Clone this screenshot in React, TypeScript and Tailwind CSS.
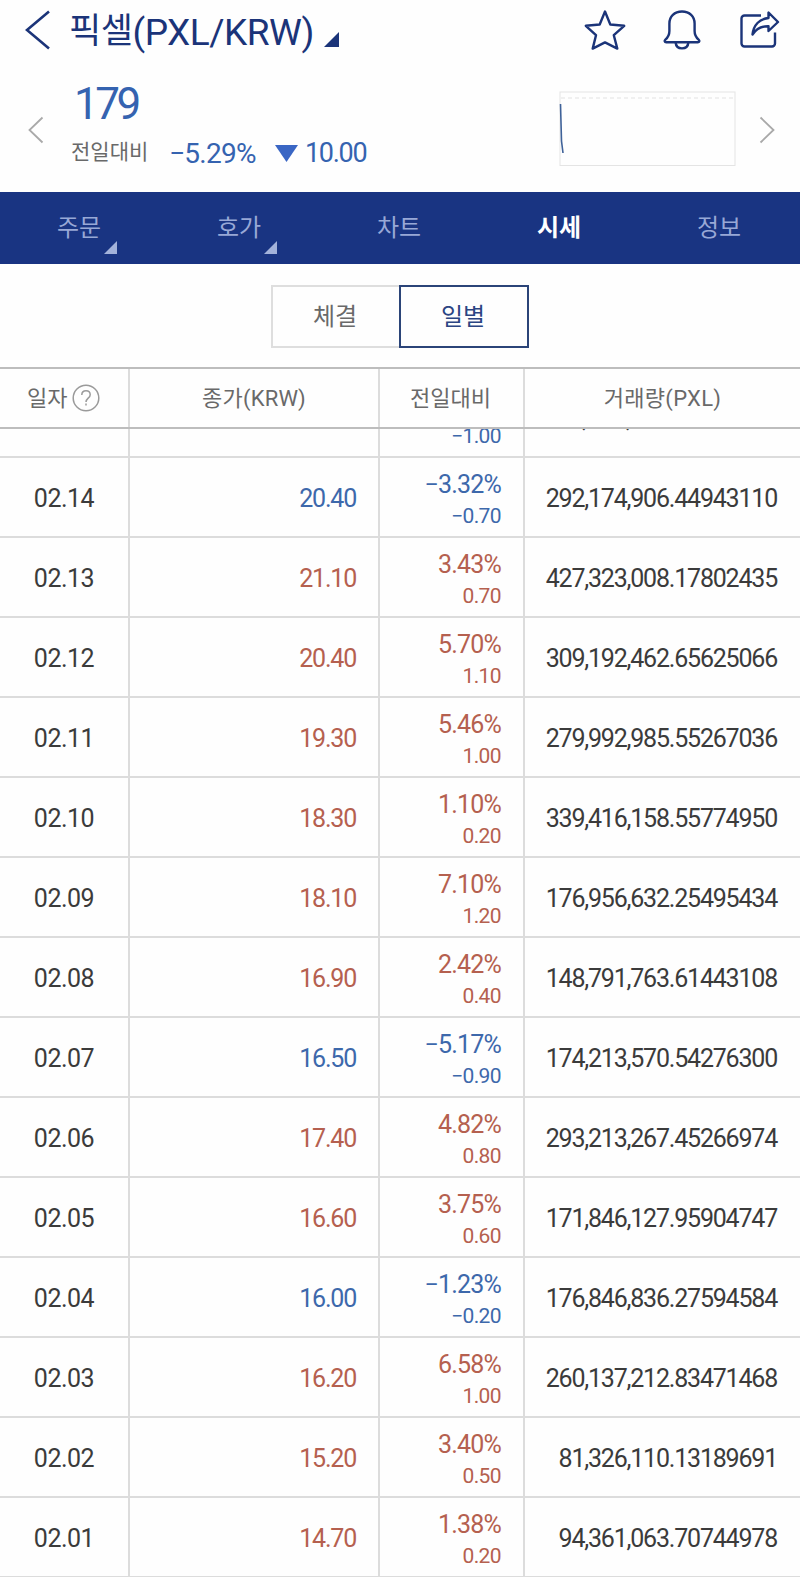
import React from 'react';

type Row = {
  date: string;
  close: string;
  rate: string;
  diff: string;
  volume: React.ReactNode;
};

const rows: Row[] = [
  { date: '02.14', close: '20.40', rate: '−3.32%', diff: '−0.70', volume: '292,174,906.44943110' },
  { date: '02.13', close: '21.10', rate: '3.43%', diff: '0.70', volume: '427,323,008.17802435' },
  { date: '02.12', close: '20.40', rate: '5.70%', diff: '1.10', volume: '309,192,462.65625066' },
  { date: '02.11', close: '19.30', rate: '5.46%', diff: '1.00', volume: '279,992,985.55267036' },
  { date: '02.10', close: '18.30', rate: '1.10%', diff: '0.20', volume: '339,416,158.55774950' },
  { date: '02.09', close: '18.10', rate: '7.10%', diff: '1.20', volume: '176,956,632.25495434' },
  { date: '02.08', close: '16.90', rate: '2.42%', diff: '0.40', volume: '148,791,763.61443108' },
  { date: '02.07', close: '16.50', rate: '−5.17%', diff: '−0.90', volume: '174,213,570.54276300' },
  { date: '02.06', close: '17.40', rate: '4.82%', diff: '0.80', volume: '293,213,267.45266974' },
  { date: '02.05', close: '16.60', rate: '3.75%', diff: '0.60', volume: '171,846,127.95904747' },
  { date: '02.04', close: '16.00', rate: '−1.23%', diff: '−0.20', volume: '176,846,836.27594584' },
  { date: '02.03', close: '16.20', rate: '6.58%', diff: '1.00', volume: '260,137,212.83471468' },
  { date: '02.02', close: '15.20', rate: '3.40%', diff: '0.50', volume: '81,326,110.13189691' },
  { date: '02.01', close: '14.70', rate: '1.38%', diff: '0.20', volume: '94,361,063.70744978' },
];

const tabs = [
  { label: '주문', more: true },
  { label: '호가', more: true },
  { label: '차트' },
  { label: '시세', active: true },
  { label: '정보' },
];

const TopBar: React.FC = () => (
  <header className="flex h-[64px] items-start pl-[25px] pr-[20px] text-[#1b3479]">
    <svg className="mt-[10px] h-[40px] w-[26px] shrink-0" viewBox="0 0 26 40" fill="none" stroke="currentColor" strokeWidth="2.6">
      <path d="M24 1.5 2 20l22 18.5" />
    </svg>
    <h1 className="ml-[18px] flex h-[64px] w-[245px] items-center whitespace-nowrap">
      <span className="text-[35px] tracking-[-0.4px]">픽셀</span>
      <span className="pt-[2px] text-[37px] tracking-[-0.5px]">(PXL/KRW)</span>
    </h1>
    <svg className="ml-[10px] mt-[32px] h-[15px] w-[15px] shrink-0" viewBox="0 0 15 15" fill="currentColor">
      <path d="M15 0v15H0z" />
    </svg>
    <div className="ml-auto flex items-start pt-[9px]">
      <svg className="h-[42px] w-[42px]" viewBox="0 0 42 42" fill="none" stroke="currentColor" strokeWidth="2.4" strokeLinejoin="round">
        <path d="M21 2.5 26.3 15.5 40.2 16.8 29.8 26.2 33.3 39.6 21 33.4 8.7 39.6 12 26.2 1.8 16.8 15.7 15.5z" />
      </svg>
      <svg className="ml-[37px] h-[42px] w-[38px]" viewBox="0 0 38 42" fill="none" stroke="currentColor" strokeWidth="2.4" strokeLinejoin="round">
        <path d="M19 2.5c-7.6 0-12.6 5-12.6 12v7.5c0 4-1.6 6.600-4 8.600-1.300 1.200-.8 2.600.8 2.600h31.600c1.600 0 2.100-1.400.8-2.600-2.400-2-4-4.600-4-8.600v-7.500c0-7-5-12-12.600-12z" />
        <path d="M12.600 33.400c.3 3.800 2.800 6 6.400 6s6.100-2.200 6.400-6" />
      </svg>
      <svg className="ml-[38px] h-[42px] w-[41px]" viewBox="0 0 41 42" fill="none" stroke="currentColor" strokeWidth="2.4" strokeLinejoin="round">
        <path d="M22 6.500H5.500a3 3 0 0 0-3 3V34.500a3 3 0 0 0 3 3H33a3 3 0 0 0 3-3V23.500" />
        <path d="M29.500 3.500v5.500c-9 .8-15 7-16 16.500 4-6 9-8.500 16-8.300v4.800L39 13z" />
      </svg>
    </div>
  </header>
);

const Summary: React.FC = () => (
  <section className="flex h-[128px] items-start pl-[28px] pr-[25px]">
    <svg className="mt-[52px] h-[28px] w-[16px] shrink-0 text-[#a9a9a9]" viewBox="0 0 16 28" fill="none" stroke="currentColor" strokeWidth="1.8">
      <path d="M14.5 1.500 1.500 14l13 12.500" />
    </svg>
    <div className="ml-[27px]">
      <p className="mt-[13px] pl-[3px] text-[44px] leading-[54px] tracking-[-3.5px] text-[#3563b0]">179</p>
      <div className="mt-[8px] flex h-[28px] items-center whitespace-nowrap text-[#3563b0]">
        <span className="w-[98px] text-[21px] text-[#696969]">전일대비</span>
        <span className="w-[86px] pt-[1px] text-[28px] tracking-[-0.7px]">−5.29%</span>
        <svg className="ml-[20px] h-[17px] w-[23px]" viewBox="0 0 23 17" fill="#3a66c4">
          <path d="M0 0h23L11.500 17z" />
        </svg>
        <span className="ml-[7px] pt-[1px] text-[27px] tracking-[-1.3px]">10.00</span>
      </div>
    </div>
    <svg className="ml-auto mt-[27px] h-[76px] w-[177px] shrink-0" viewBox="0 0 177 76" fill="none">
      <rect x="1" y="1" width="175" height="73.500" stroke="#e4e4e4" />
      <path d="M2 7H175" stroke="#e2e2e2" strokeDasharray="4 3" />
      <path d="M1.500 13 2.500 50 4 62" stroke="#3f6299" strokeWidth="1.600" />
    </svg>
    <svg className="ml-[23px] mt-[52px] h-[28px] w-[16px] shrink-0 text-[#a9a9a9]" viewBox="0 0 16 28" fill="none" stroke="currentColor" strokeWidth="1.8">
      <path d="M1.500 1.500 14.500 14l-13 12.500" />
    </svg>
  </section>
);

const TabBar: React.FC = () => (
  <nav className="grid h-[72px] grid-cols-5 bg-[#193482]">
    {tabs.map((tab) => (
      <div
        key={tab.label}
        className={`relative flex items-center justify-center pr-[2px] text-[24px] ${
          tab.active ? 'font-bold text-white' : 'text-[#98a8d6]'
        }`}
      >
        {tab.label}
        {tab.more && (
          <svg className="absolute bottom-[10px] right-[43px] h-[13px] w-[13px]" viewBox="0 0 13 13" fill="#a3b2da">
            <path d="M13 0v13H0z" />
          </svg>
        )}
      </div>
    ))}
  </nav>
);

const TableRow: React.FC<{ row: Row }> = ({ row }) => {
  const color = row.diff.startsWith('−') ? 'text-[#3d68ab]' : 'text-[#b5604f]';
  return (
    <div className="grid h-[80px] shrink-0 grid-cols-[130px_250px_145px_275px] border-b-2 border-[#dcdcdc] text-[25px] text-[#3b3b3b]">
      <div className="flex items-center justify-center border-r-2 border-[#dcdcdc] pt-[4px] tracking-[-0.5px]">
        {row.date}
      </div>
      <div className={`flex items-center justify-end border-r-2 border-[#dcdcdc] pr-[22px] pt-[4px] tracking-[-1.2px] ${color}`}>
        {row.close}
      </div>
      <div className={`flex flex-col items-end border-r-2 border-[#dcdcdc] pr-[22px] pt-[11px] ${color}`}>
        <span className="h-[32px] leading-[32px] tracking-[-0.8px]">{row.rate}</span>
        <span className="h-[30px] text-[21px] leading-[30px] tracking-[-0.6px]">{row.diff}</span>
      </div>
      <div className="flex items-center justify-end pr-[23px] pt-[4px] tracking-[-1.2px]">{row.volume}</div>
    </div>
  );
};

const App: React.FC = () => {
  return (
    <main className="h-[1577px] w-[800px] overflow-hidden bg-[#fefefe] font-['Roboto','Noto_Sans_CJK_KR',sans-serif]">
      <TopBar />
      <Summary />
      <TabBar />

      {/* Trades / daily switch */}
      <div className="flex h-[103px] justify-center pt-[21px] text-[24px]">
        <div className="flex h-[63px] w-[128px] items-center justify-center border-2 border-r-0 border-[#dedede] pr-[2px] text-[#696969]">
          체결
        </div>
        <div className="flex h-[63px] w-[130px] items-center justify-center border-2 border-[#2b4478] pr-[2px] text-[#2b4583]">
          일별
        </div>
      </div>

      {/* Column titles */}
      <div className="grid h-[62px] grid-cols-[130px_250px_145px_275px] border-y-2 border-[#bdbdbd] text-[22px] text-[#696969]">
        <div className="flex items-center border-r-2 border-[#dcdcdc] pl-[27px]">
          일자
          <svg className="ml-[5px] h-[28px] w-[28px]" viewBox="0 0 28 28" fill="none" stroke="#9a9a9a" strokeWidth="1.500">
            <circle cx="14" cy="14" r="12.800" />
            <path d="M9.800 11c0-2.600 1.700-4.300 4.200-4.300s4.200 1.600 4.200 4c0 3.400-4.200 3.600-4.200 7.300M14 19.600v2" />
          </svg>
        </div>
        <div className="flex items-center justify-center border-r-2 border-[#dcdcdc] tracking-[0.2px]">종가(KRW)</div>
        <div className="flex items-center justify-center border-r-2 border-[#dcdcdc] pr-[2px]">전일대비</div>
        <div className="flex items-center justify-center tracking-[0.3px]">거래량(PXL)</div>
      </div>

      {/* Row scrolled halfway under the column titles */}
      <div className="flex h-[29px] flex-col justify-end overflow-hidden">
        <TableRow
          row={{
            date: '',
            close: '',
            rate: '',
            diff: '−1.00',
            volume: <span className="mr-[107px] tracking-[39px]">,,</span>,
          }}
        />
      </div>
      {rows.map((row) => (
        <TableRow key={row.date} row={row} />
      ))}
    </main>
  );
};

export default App;
